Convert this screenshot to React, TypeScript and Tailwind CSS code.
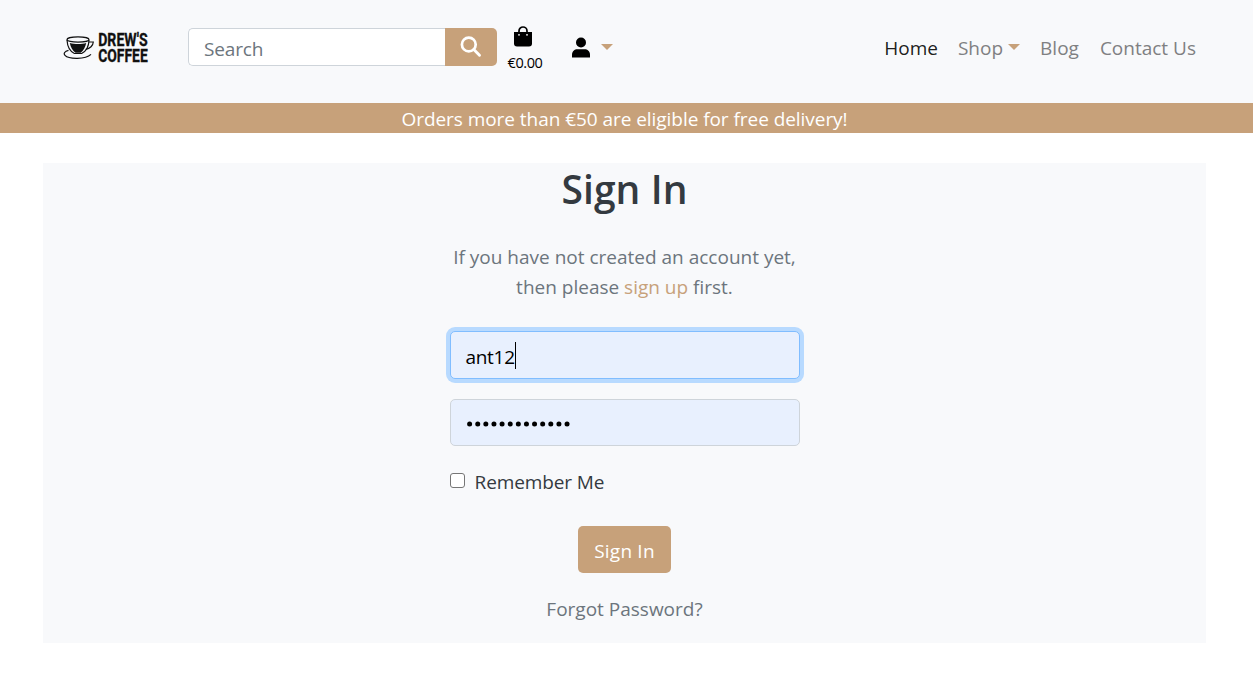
import type { ReactNode } from "react";

function Logo() {
  return (
    <svg width="90" height="44" viewBox="0 -6 90 44" aria-label="Drew's Coffee" className="block">
      <g fill="none" stroke="#111" strokeWidth="1.2">
        <ellipse cx="15" cy="7.500" rx="11" ry="2.700" />
        <path d="M4 8c.4 6.500 3.200 11.500 7.400 13.500h7.200c4.200-2 7.200-7 7.400-13.500" />
        <path d="M26 10h4.300c-.2 3.500-3.300 6.700-7.500 7.400" />
        <path d="M5.500 18.300C1.700 19.300.2 21.500 2 23.400c3.700 4 20.500 4.200 26-1" />
      </g>
      <path d="M6.800 10.900c5 1.500 12 1.500 16.400 0-.8 4.300-2.900 7.900-5.500 9.900h-5.200c-2.800-2-4.900-5.600-5.700-9.900z" fill="#111" />
      <g fill="#111" stroke="#111" strokeWidth=".3" fontWeight="700" className="font-['Roboto',sans-serif]" fontSize="17.5">
        <text x="35.200" y="14" textLength="49.500" lengthAdjust="spacingAndGlyphs">DREW'S</text>
        <text x="35.200" y="30" textLength="49.500" lengthAdjust="spacingAndGlyphs">COFFEE</text>
      </g>
    </svg>
  );
}

function Caret() {
  return (
    <svg width="12" height="6" viewBox="0 0 12 6" className="shrink-0">
      <path d="M0 0h12L6 6z" fill="#c7a17a" />
    </svg>
  );
}

function NavLink({ children, active }: { children: ReactNode; active?: boolean }) {
  return (
    <a href="#" className={active ? "text-black/90" : "text-[#7f8082]"}>
      {children}
    </a>
  );
}

export default function App() {
  return (
    <div className="min-h-[681px] bg-white font-['Open_Sans','Noto_Sans',sans-serif] text-[19px] leading-[30px] text-[#343a40]">
      <header className="flex h-[103px] items-start bg-[#f8f9fb] pl-[63px] pr-[57px]">
        <a href="#" className="mt-[26px] w-[90px] shrink-0">
          <Logo />
        </a>
        <form className="ml-[35px] mt-7 flex h-[38px] w-[309px]">
          <div className="flex flex-1 items-center rounded-l-[5px] border border-r-0 border-[#ced4da] bg-white pl-[15px] pt-[3px] tracking-[-0.15px] text-[#6c757d]">Search</div>
          <button type="button" className="flex w-[52px] items-center justify-center rounded-r-[5px] bg-[#c7a17a]" aria-label="Search">
            <svg width="22" height="22" viewBox="0 0 22 22" fill="none" stroke="white" strokeLinecap="round">
              <circle cx="8.800" cy="8.500" r="6.900" strokeWidth="2.700" />
              <path d="M13.800 13.500l5.700 5.700" strokeWidth="2.900" />
            </svg>
          </button>
        </form>
        <a href="#" className="ml-[10px] mt-[26px] flex w-9 flex-col items-center text-black">
          <svg width="18" height="21" viewBox="0 0 18 21" className="-ml-1">
            <path d="M5 9V5a4 4 0 0 1 8 0v4" fill="none" stroke="black" strokeWidth="1.700" />
            <path d="M0 6h18v11.500a3 3 0 0 1-3 3H3a3 3 0 0 1-3-3z" fill="black" />
            <circle cx="5" cy="8.800" r=".9" fill="white" />
            <circle cx="13" cy="8.800" r=".9" fill="white" />
          </svg>
          <span className="mt-[6px] whitespace-nowrap text-[14.500px] leading-5 tracking-[-0.4px]">€0.00</span>
        </a>
        <button type="button" className="ml-[29px] mt-[37px] flex items-center gap-[11px]" aria-label="Account">
          <svg width="18" height="21" viewBox="0 0 18 21">
            <circle cx="9" cy="5.500" r="5" fill="black" />
            <path d="M0 20.500v-2.700c0-3.600 2.500-5.600 5.500-5.600h7c3 0 5.500 2 5.500 5.600v2.700z" fill="black" />
          </svg>
          <span className="-mt-[2px] flex"><Caret /></span>
        </button>
        <nav className="ml-auto mt-[33px] flex gap-5 whitespace-nowrap">
          <NavLink active>Home</NavLink>
          <NavLink>
            <span className="flex items-center gap-[5px]">Shop<span className="-mt-[3px] flex"><Caret /></span></span>
          </NavLink>
          <NavLink>Blog</NavLink>
          <span className="ml-px"><NavLink>Contact Us</NavLink></span>
        </nav>
      </header>
      <div className="h-[30px] bg-[#c7a17a] pr-1 pt-px text-center tracking-[-0.050px] text-white">Orders more than €50 are eligible for free delivery!</div>
      <main className="ml-[43px] mr-[47px] mt-[30px] flex h-[480px] flex-col items-center bg-[#f8f9fb]">
        <h1 className="mt-[2px] text-[39px] font-semibold leading-[48px] tracking-[0.100px]">Sign In</h1>
        <p className="mt-[29px] whitespace-nowrap text-center text-[#6c757d]">
          If you have not created an account yet,
          <br />
          then please <a href="#" className="text-[#c7a17a]">sign up</a> first.
        </p>
        <div className="mt-[29px] flex h-12 w-[350px] items-center rounded-[5px] border border-[#80bdff] bg-[#e8f0fe] pl-[15px] pt-[3px] text-black shadow-[0_0_0_4px_#b8daff]">
          <span className="tracking-[-0.3px]">ant12</span>
          <span className="-mt-[2px] h-[27px] w-px bg-black" />
        </div>
        <div className="mt-5 flex h-[47px] w-[350px] items-center rounded-[5px] border border-[#ced4da] bg-[#e8f0fe] pl-4 pt-[3px]">
          <svg width="106" height="6" viewBox="0 0 106 6" aria-label="Password">
            {Array.from({ length: 13 }, (_, i) => (
              <circle key={i} cx={2.6 + i * 8.12} cy="3" r="2.500" fill="black" />
            ))}
          </svg>
        </div>
        <label className="mt-[19px] flex w-[350px] items-center gap-[10px]">
          <span className="-mt-[2px] size-[15px] rounded-[3px] border border-[#767676] bg-white" />
          <span className="pt-[2px] tracking-[-0.100px]">Remember Me</span>
        </label>
        <button type="button" className="mt-[29px] h-[47px] w-[93px] rounded-[5px] bg-[#c7a17a] pt-[2px] tracking-[0.200px] text-white">Sign In</button>
        <a href="#" className="mt-[21px] text-[#6c757d]">Forgot Password?</a>
      </main>
    </div>
  );
}
